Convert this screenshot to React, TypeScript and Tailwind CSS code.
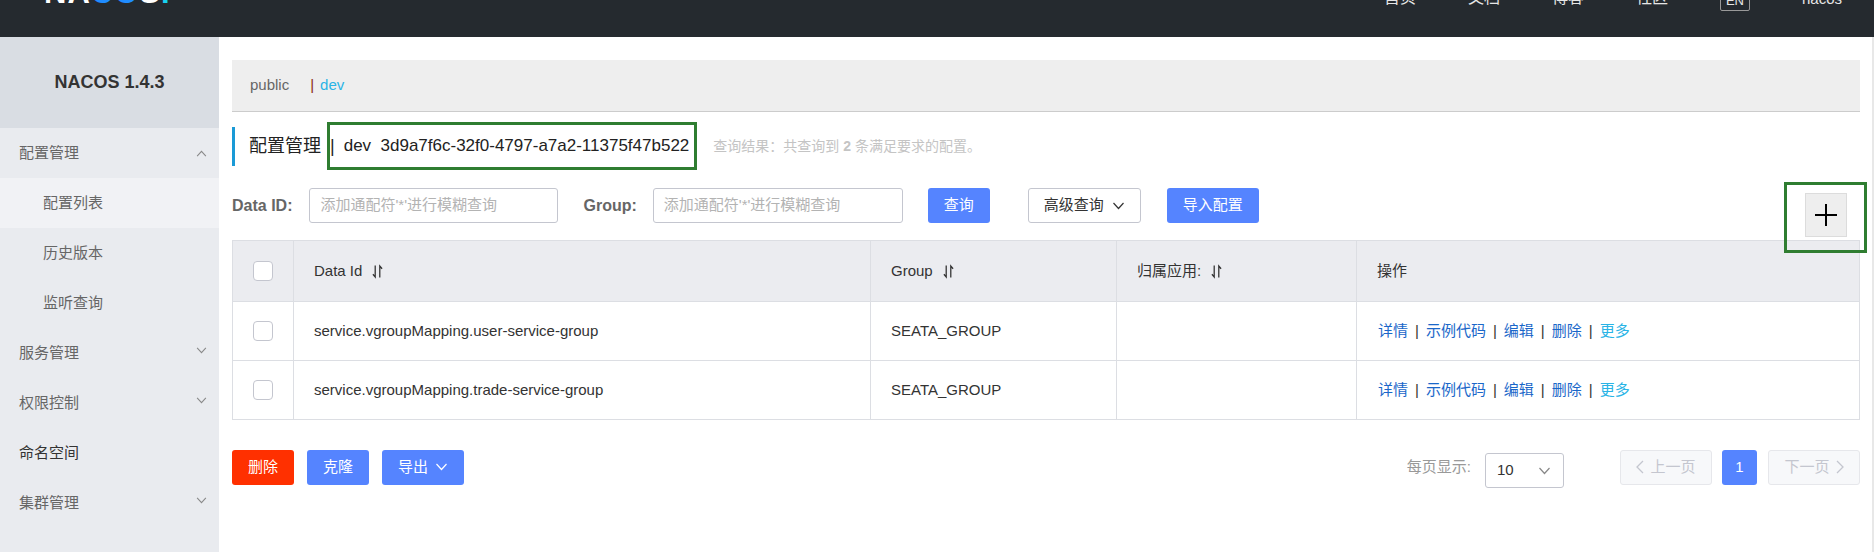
import React from "react";

const NAV = ["首页", "文档", "博客", "社区"];

const ROWS = [
  { dataId: "service.vgroupMapping.user-service-group", group: "SEATA_GROUP" },
  { dataId: "service.vgroupMapping.trade-service-group", group: "SEATA_GROUP" },
];

const ACTIONS = ["详情", "示例代码", "编辑", "删除"];

function Chevron({ up = false, className = "" }: { up?: boolean; className?: string }) {
  return (
    <svg viewBox="0 0 12 8" className={className} fill="none" stroke="currentColor" strokeWidth="1.2">
      {up ? <polyline points="1,7 6,1.5 11,7" /> : <polyline points="1,1 6,6.5 11,1" />}
    </svg>
  );
}

function SortIcon() {
  return (
    <svg viewBox="0 0 12 16" className="ml-[10px] h-[15px] w-[11px]" fill="none" stroke="#333" strokeWidth="1.4">
      <path d="M3.5 1.5V14L1 11" />
      <path d="M8.5 14.5V2L11 5" />
    </svg>
  );
}

function Checkbox() {
  return <div className="h-[20px] w-[20px] rounded-[4px] border border-[#c4c6cf] bg-white" />;
}

function Sidebar() {
  return (
    <aside className="flex w-[219px] shrink-0 flex-col bg-[#e9ebef] text-[15px] text-[#666]">
      <div className="flex h-[91px] items-center justify-center bg-[#d9dde3] text-[18px] font-bold text-[#333]">
        NACOS 1.4.3
      </div>
      <div className="flex h-[50px] items-center justify-between pl-[19px] pr-[12px]">
        <span>配置管理</span>
        <Chevron up className="h-[7px] w-[11px] text-[#888]" />
      </div>
      <div className="flex h-[50px] items-center bg-[#f1f2f5] pl-[43px]">配置列表</div>
      <div className="flex h-[50px] items-center pl-[43px]">历史版本</div>
      <div className="flex h-[50px] items-center pl-[43px]">监听查询</div>
      {["服务管理", "权限控制"].map((m) => (
        <div key={m} className="flex h-[50px] items-center justify-between pl-[19px] pr-[12px]">
          <span>{m}</span>
          <Chevron className="-mt-[6px] h-[7px] w-[11px] text-[#888]" />
        </div>
      ))}
      <div className="flex h-[50px] items-center pl-[19px] text-[#333]">命名空间</div>
      <div className="flex h-[50px] items-center justify-between pl-[19px] pr-[12px]">
        <span>集群管理</span>
        <Chevron className="-mt-[6px] h-[7px] w-[11px] text-[#888]" />
      </div>
    </aside>
  );
}

export default function App() {
  return (
    <div className="flex min-h-[552px] flex-col bg-white font-['Liberation_Sans','Noto_Sans_CJK_SC',sans-serif]">
      {/* top bar, scrolled so only the bottom of it shows */}
      <header className="h-[37px] shrink-0 overflow-hidden bg-[#252a2f]">
        <div className="-mt-[24px] flex h-[30px] items-end pl-[44px] pr-[32px] text-[16px] leading-none text-[#e6e6e6]">
          <div className="-mb-[2px] text-[31px] font-bold leading-none tracking-[1px]">
            <span className="text-white">NA</span>
            <span className="text-[#1f8cff]">CO</span>
            <span className="text-white">S</span>
            <span className="text-[#18d1f0]">.</span>
          </div>
          <nav className="ml-auto flex items-end gap-[52px]">
            {NAV.map((n) => (
              <span key={n}>{n}</span>
            ))}
            <span className="-mb-[5px] flex h-[22px] w-[30px] items-center justify-center rounded-[2px] border border-[#999] text-[13px]">
              EN
            </span>
            <span className="text-[15px]">nacos</span>
          </nav>
        </div>
      </header>

      <div className="flex flex-1">
        <Sidebar />

        <main className="flex-1 border-r-2 border-[#e8e8e8] pb-[20px] pl-[13px] pr-[12px] pt-[23px] text-[15px] text-[#333]">
          {/* namespace bar */}
          <div className="flex h-[52px] items-center border-b border-[#cccccc] bg-[#eeeeee] pl-[18px]">
            <span className="text-[#666]">public</span>
            <span className="ml-[21px] text-[#8b2d10]">|</span>
            <span className="ml-[6px] text-[#2ab4e6]">dev</span>
          </div>

          {/* title */}
          <div className="mt-[10px] flex h-[48px] items-center">
            <div className="h-[39px] w-[3px] bg-[#1a9ad6]" />
            <span className="ml-[14px] text-[18px] text-[#222]">配置管理</span>
            <div className="ml-[6px] flex h-[48px] items-center border-[3px] border-[#2f7d31] pr-[5px] text-[17px] text-[#222]">
              <span className="text-[18px]">|</span>
              <span className="ml-[9px] whitespace-pre">dev  3d9a7f6c-32f0-4797-a7a2-11375f47b522</span>
            </div>
            <span className="ml-[16px] text-[14px] text-[#c4c4c4]">
              查询结果：共查询到 <b className="font-bold">2</b> 条满足要求的配置。
            </span>
          </div>

          {/* filters */}
          <div className="mt-[18px] flex items-start">
            <span className="flex h-[35px] items-center text-[16px] font-bold text-[#666]">Data ID:</span>
            <div className="ml-[17px] flex h-[35px] w-[249px] items-center rounded-[3px] border border-[#c4c6cf] pl-[10px] text-[#b3b3b3]">
              添加通配符'*'进行模糊查询
            </div>
            <span className="ml-[25px] flex h-[35px] items-center text-[16px] font-bold text-[#666]">Group:</span>
            <div className="ml-[16px] flex h-[35px] w-[250px] items-center rounded-[3px] border border-[#c4c6cf] pl-[10px] text-[#b3b3b3]">
              添加通配符'*'进行模糊查询
            </div>
            <button className="ml-[25px] flex h-[35px] w-[62px] items-center justify-center rounded-[3px] bg-[#5584ff] text-white">
              查询
            </button>
            <button className="ml-[38px] flex h-[35px] w-[113px] items-center justify-center gap-[8px] rounded-[3px] border border-[#c4c6cf] bg-white text-[#333]">
              高级查询
              <Chevron className="h-[8px] w-[13px]" />
            </button>
            <button className="ml-[26px] flex h-[35px] w-[92px] items-center justify-center rounded-[3px] bg-[#5584ff] text-white">
              导入配置
            </button>
            <div className="relative ml-auto mr-[13px] mt-[5px]">
              <div className="flex h-[44px] w-[42px] items-center justify-center border border-[#dcdcdc] bg-[#eeeeee]">
                <svg viewBox="0 0 22 22" className="h-[22px] w-[22px]" stroke="#000" strokeWidth="2">
                  <path d="M11 0V22M0 11H22" />
                </svg>
              </div>
              {/* green annotation frame */}
              <div className="absolute -left-[21px] -top-[11px] h-[71px] w-[83px] border-[3px] border-[#2f7d31]" />
            </div>
          </div>

          {/* table */}
          <div className="mt-[3px] border border-[#dcdee3]">
            <div className="grid h-[60px] grid-cols-[61px_577px_246px_240px_1fr] bg-[#ebecf0]">
              <div className="flex items-center justify-center border-r border-[#dcdee3]">
                <Checkbox />
              </div>
              <div className="flex items-center border-r border-[#dcdee3] pl-[20px]">
                Data Id
                <SortIcon />
              </div>
              <div className="flex items-center border-r border-[#dcdee3] pl-[20px]">
                Group
                <SortIcon />
              </div>
              <div className="flex items-center border-r border-[#dcdee3] pl-[20px]">
                归属应用:
                <SortIcon />
              </div>
              <div className="flex items-center pl-[20px]">操作</div>
            </div>
            {ROWS.map((r) => (
              <div key={r.dataId} className="grid h-[59px] grid-cols-[61px_577px_246px_240px_1fr] border-t border-[#dcdee3]">
                <div className="flex items-center justify-center border-r border-[#dcdee3]">
                  <Checkbox />
                </div>
                <div className="flex items-center border-r border-[#dcdee3] pl-[20px]">{r.dataId}</div>
                <div className="flex items-center border-r border-[#dcdee3] pl-[20px]">{r.group}</div>
                <div className="border-r border-[#dcdee3]" />
                <div className="flex items-center pl-[21px] text-[#1a67c9]">
                  {ACTIONS.map((a) => (
                    <React.Fragment key={a}>
                      <span>{a}</span>
                      <span className="mx-[7px] text-[#333]">|</span>
                    </React.Fragment>
                  ))}
                  <span className="text-[#2ab4e6]">更多</span>
                </div>
              </div>
            ))}
          </div>

          {/* footer actions + pagination */}
          <div className="mt-[26px] flex items-center">
            <button className="flex h-[35px] w-[62px] items-center justify-center rounded-[3px] bg-[#ff3000] text-white">删除</button>
            <button className="ml-[13px] flex h-[35px] w-[62px] items-center justify-center rounded-[3px] bg-[#5584ff] text-white">克隆</button>
            <button className="ml-[13px] flex h-[35px] w-[82px] items-center justify-center gap-[7px] rounded-[3px] bg-[#5584ff] text-white">
              导出
              <Chevron className="h-[8px] w-[13px]" />
            </button>

            <span className="ml-auto text-[#999]">每页显示:</span>
            <div className="ml-[14px] mt-[7px] flex h-[35px] w-[79px] items-center justify-between rounded-[3px] border border-[#c4c6cf] pl-[11px] pr-[11px] text-[#333]">
              <span>10</span>
              <Chevron className="h-[8px] w-[15px] text-[#888]" />
            </div>
            <button className="ml-[56px] flex h-[35px] w-[92px] items-center justify-center gap-[6px] rounded-[3px] border border-[#e6e7eb] bg-[#f7f8fa] text-[#c4c6cf]">
              <svg viewBox="0 0 8 14" className="h-[14px] w-[8px]" fill="none" stroke="currentColor" strokeWidth="1.3">
                <polyline points="7,1 1,7 7,13" />
              </svg>
              上一页
            </button>
            <button className="ml-[10px] flex h-[35px] w-[35px] items-center justify-center rounded-[3px] bg-[#5584ff] text-white">1</button>
            <button className="ml-[11px] flex h-[35px] w-[92px] items-center justify-center gap-[6px] rounded-[3px] border border-[#e6e7eb] bg-[#f7f8fa] text-[#c4c6cf]">
              下一页
              <svg viewBox="0 0 8 14" className="h-[14px] w-[8px]" fill="none" stroke="currentColor" strokeWidth="1.3">
                <polyline points="1,1 7,7 1,13" />
              </svg>
            </button>
          </div>
        </main>
      </div>
    </div>
  );
}
